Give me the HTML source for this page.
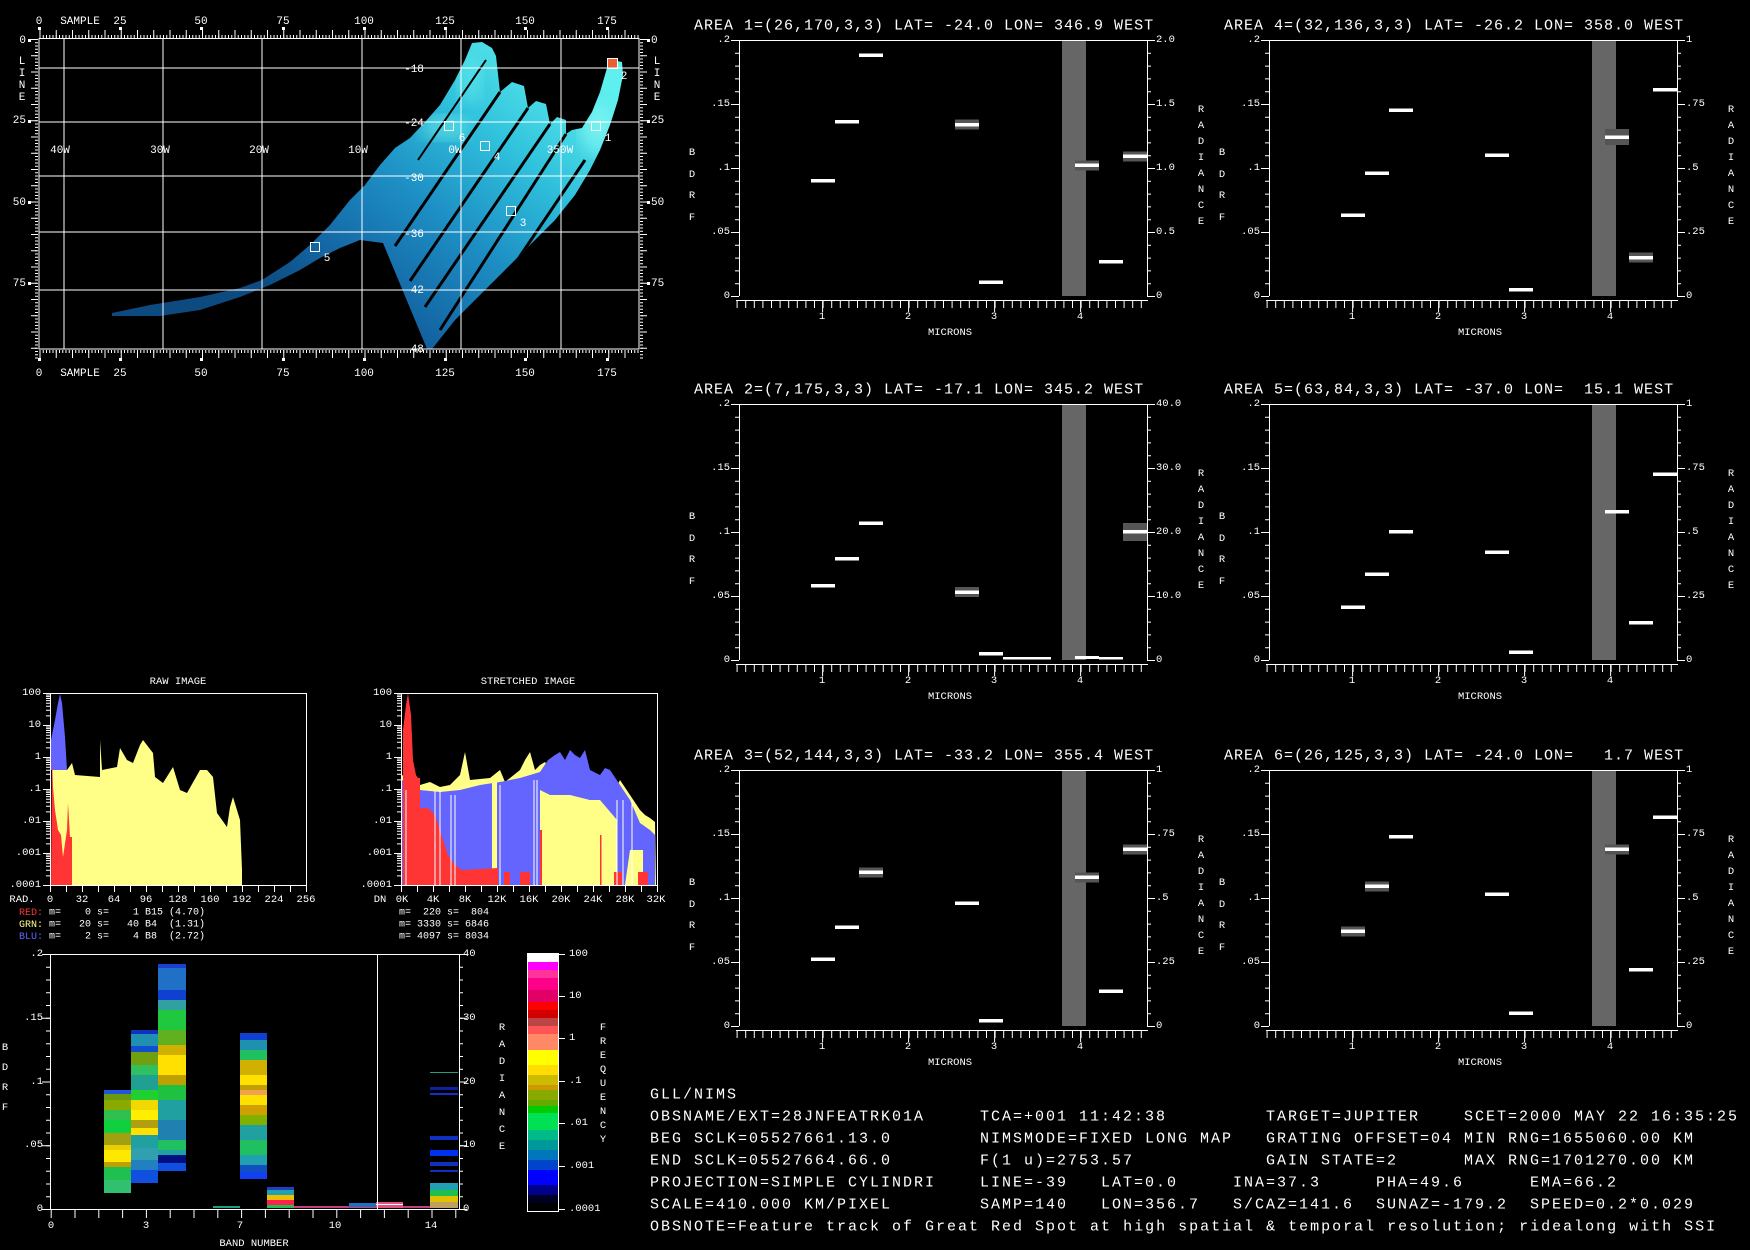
<!DOCTYPE html>
<html><head><meta charset="utf-8"><style>
html,body{margin:0;padding:0;background:#000;}
svg{display:block;}
text{font-family:"Liberation Mono","DejaVu Sans Mono",monospace;fill:#fff;white-space:pre;}
.t{font-size:15px;letter-spacing:1px;dominant-baseline:central;}
.s{font-size:10.5px;dominant-baseline:central;}
.m{font-size:11px;dominant-baseline:central;}
.b{font-size:15px;letter-spacing:2px;dominant-baseline:central;}
.l{font-size:10px;dominant-baseline:central;}
</style></head><body>
<svg width="1750" height="1250" viewBox="0 0 1750 1250" xmlns="http://www.w3.org/2000/svg" xml:space="preserve">
<defs>
<linearGradient id="sw" gradientUnits="userSpaceOnUse" x1="560" y1="50" x2="330" y2="340">
<stop offset="0" stop-color="#5ef0ee"/><stop offset="0.3" stop-color="#2fc0dc"/><stop offset="0.55" stop-color="#1d8fc4"/><stop offset="0.8" stop-color="#1468a6"/><stop offset="1" stop-color="#0c4a80"/></linearGradient>
<filter id="bl"><feGaussianBlur stdDeviation="8"/></filter>
<clipPath id="swc"><polygon points="112,313 150,305 200,297 240,288 262,280 290,262 310,245 330,225 350,200 365,185 380,165 395,148 410,138 425,122 440,105 455,80 465,60 472,43 482,42 492,48 496,56 500,92 512,82 524,86 528,108 536,101 546,104 550,124 557,117 566,120 566,134 572,130 582,128 592,112 600,92 607,68 612,60 622,62 623,75 618,100 610,125 600,150 590,170 575,195 555,220 530,245 505,270 480,295 455,320 432,349 427,349 383,243 360,240 340,248 320,258 300,270 270,285 240,297 200,310 160,316 112,316"/></clipPath>
<g id="ax" fill="none" stroke="#fff">
<path d="M0 0.5H408M0.5 0V256M408.5 0V256M-3 260.5H409"/>
<line x1="-2" y1="0" x2="-2" y2="257" stroke-width="4" stroke-dasharray="1 11.8"/>
<line x1="-4" y1="0" x2="-4" y2="257" stroke-width="8" stroke-dasharray="1 63"/>
<line x1="410" y1="0" x2="410" y2="257" stroke-width="4" stroke-dasharray="1 11.8"/>
<line x1="412" y1="0" x2="412" y2="257" stroke-width="8" stroke-dasharray="1 63"/>
<line x1="-2.4" y1="264" x2="409" y2="264" stroke-width="8" stroke-dasharray="1 7.6"/>
<path d="M83.6 260V272M169.6 260V272M255.6 260V272M341.6 260V272"/>
</g>
<g id="dec" stroke="#fff">
<path d="M-7 0.5H0M-4 2H0M-4 3.6H0M-4 5.5H0M-4 7.6H0M-4 10.2H0M-4 13.2H0M-4 17.2H0M-4 22.9H0"/>
</g>
</defs>

<!-- ============ MAP ============ -->
<g clip-path="url(#swc)">
<rect x="100" y="38" width="540" height="312" fill="url(#sw)"/>
<ellipse cx="598" cy="128" rx="18" ry="26" fill="#8ffff8" opacity="0.55" filter="url(#bl)"/>
<ellipse cx="445" cy="128" rx="25" ry="12" fill="#7ffff0" opacity="0.45" filter="url(#bl)"/>
<ellipse cx="470" cy="80" rx="12" ry="25" fill="#6ff8f0" opacity="0.4" filter="url(#bl)"/>
<g stroke="#000" stroke-width="3">
<line x1="500" y1="92" x2="395" y2="246"/>
<line x1="528" y1="108" x2="410" y2="281"/>
<line x1="550" y1="124" x2="425" y2="307"/>
<line x1="566" y1="134" x2="440" y2="330"/>
<line x1="585" y1="160" x2="460" y2="345"/>
<line x1="486" y1="60" x2="418" y2="160" stroke-width="2"/>
</g>
</g>
<rect x="608" y="58" width="10" height="10" fill="#e86030"/>
<g stroke="#fff" fill="none">
<path d="M64 39V349M163 39V349M262 39V349M362 39V349M461 39V349M561 39V349M39 68H639M39 122H639M39 176H639M39 232H639M39 290H639"/>
<rect x="39" y="38.5" width="600" height="310.5"/>
<line x1="39.5" y1="36.5" x2="639" y2="36.5" stroke-width="3" stroke-dasharray="1 2.25"/>
<line x1="39.5" y1="34" x2="639" y2="34" stroke-width="8" stroke-dasharray="1 15.25"/>
<line x1="39.5" y1="351.5" x2="639" y2="351.5" stroke-width="3" stroke-dasharray="1 2.25"/>
<line x1="39.5" y1="354" x2="639" y2="354" stroke-width="8" stroke-dasharray="1 15.25"/>
<line x1="36.5" y1="39" x2="36.5" y2="360" stroke-width="3" stroke-dasharray="1 2.25"/>
<line x1="34" y1="39" x2="34" y2="360" stroke-width="6" stroke-dasharray="1 15.25"/>
<line x1="641.5" y1="39" x2="641.5" y2="360" stroke-width="3" stroke-dasharray="1 2.25"/>
<line x1="644" y1="39" x2="644" y2="360" stroke-width="6" stroke-dasharray="1 15.25"/>
<rect x="310.5" y="242.5" width="9" height="9"/>
<rect x="444.5" y="121.5" width="9" height="9"/>
<rect x="480.5" y="141.5" width="9" height="9"/>
<rect x="506.5" y="206.5" width="9" height="9"/>
<rect x="591.5" y="121.5" width="9" height="9"/>
<rect x="607.5" y="58.5" width="10" height="10"/>
</g>
<g fill="#fff">
<rect x="38" y="27" width="3" height="3"/><rect x="119" y="27" width="3" height="3"/><rect x="200" y="27" width="3" height="3"/><rect x="282" y="27" width="3" height="3"/><rect x="363" y="27" width="3" height="3"/><rect x="444" y="27" width="3" height="3"/><rect x="524" y="27" width="3" height="3"/><rect x="606" y="27" width="3" height="3"/>
<rect x="38" y="358" width="3" height="3"/><rect x="119" y="358" width="3" height="3"/><rect x="200" y="358" width="3" height="3"/><rect x="282" y="358" width="3" height="3"/><rect x="363" y="358" width="3" height="3"/><rect x="444" y="358" width="3" height="3"/><rect x="524" y="358" width="3" height="3"/><rect x="606" y="358" width="3" height="3"/>
<rect x="28" y="39" width="3" height="3"/><rect x="28" y="120" width="3" height="3"/><rect x="28" y="201" width="3" height="3"/><rect x="28" y="282" width="3" height="3"/>
<rect x="647" y="39" width="3" height="3"/><rect x="647" y="120" width="3" height="3"/><rect x="647" y="201" width="3" height="3"/><rect x="647" y="282" width="3" height="3"/>
</g>
<g class="m" text-anchor="middle">
<text x="39" y="22">0</text><text x="80" y="22">SAMPLE</text><text x="120" y="22">25</text><text x="201" y="22">50</text><text x="283" y="22">75</text><text x="364" y="22">100</text><text x="445" y="22">125</text><text x="525" y="22">150</text><text x="607" y="22">175</text>
<text x="39" y="374">0</text><text x="80" y="374">SAMPLE</text><text x="120" y="374">25</text><text x="201" y="374">50</text><text x="283" y="374">75</text><text x="364" y="374">100</text><text x="445" y="374">125</text><text x="525" y="374">150</text><text x="607" y="374">175</text>
<text x="22" y="62">L</text><text x="22" y="74">I</text><text x="22" y="86">N</text><text x="22" y="98">E</text>
<text x="657" y="62">L</text><text x="657" y="74">I</text><text x="657" y="86">N</text><text x="657" y="98">E</text>
<text x="60" y="151">40W</text><text x="160" y="151">30W</text><text x="259" y="151">20W</text><text x="358" y="151">10W</text><text x="455" y="151">0W</text><text x="560" y="151">350W</text>
<text x="414" y="70">-18</text><text x="414" y="124">-24</text><text x="414" y="179">-30</text><text x="414" y="235">-36</text><text x="414" y="291">-42</text><text x="414" y="350">-48</text>
<text x="608" y="139">1</text><text x="624" y="77">2</text><text x="523" y="224">3</text><text x="497" y="158">4</text><text x="327" y="259">5</text><text x="462" y="139">6</text>
</g>
<g class="m" text-anchor="end">
<text x="26" y="41">0</text><text x="26" y="121">25</text><text x="26" y="203">50</text><text x="26" y="284">75</text>
</g>
<g class="m">
<text x="651" y="41">0</text><text x="651" y="121">25</text><text x="651" y="203">50</text><text x="651" y="284">75</text>
</g>

<!-- ============ SPECTRA PANELS ============ -->
<g fill="#666">
<rect x="1062" y="40" width="24" height="256"/><rect x="1592" y="40" width="24" height="256"/>
<rect x="1062" y="404" width="24" height="256"/><rect x="1592" y="404" width="24" height="256"/>
<rect x="1062" y="770" width="24" height="256"/><rect x="1592" y="770" width="24" height="256"/>
</g>
<use href="#ax" x="739" y="40"/><use href="#ax" x="1269" y="40"/>
<use href="#ax" x="739" y="404"/><use href="#ax" x="1269" y="404"/>
<use href="#ax" x="739" y="770"/><use href="#ax" x="1269" y="770"/>

<g fill="#555">
<rect x="955" y="119.5" width="24" height="10"/><rect x="1075" y="160.5" width="24" height="10"/><rect x="1123" y="151.5" width="24" height="10"/>
<rect x="1605" y="129" width="24" height="16"/><rect x="1629" y="252.5" width="24" height="10"/>
<rect x="955" y="587" width="24" height="10"/><rect x="1123" y="523" width="24" height="18"/>
<rect x="859" y="867.5" width="24" height="10"/><rect x="1075" y="872.5" width="24" height="10"/><rect x="1123" y="844.5" width="24" height="10"/>
<rect x="1341" y="926.5" width="24" height="10"/><rect x="1365" y="881.5" width="24" height="10"/><rect x="1605" y="844.5" width="24" height="10"/>
</g>
<g fill="#fff">
<rect x="811" y="179" width="24" height="3.5"/><rect x="835" y="120" width="24" height="3.5"/><rect x="859" y="53.5" width="24" height="3.5"/><rect x="955" y="123" width="24" height="3.5"/><rect x="979" y="280.5" width="24" height="3.5"/><rect x="1075" y="163.5" width="24" height="3.5"/><rect x="1099" y="260" width="24" height="3.5"/><rect x="1123" y="154.5" width="24" height="3.5"/>
<rect x="1341" y="213.5" width="24" height="3.5"/><rect x="1365" y="171.5" width="24" height="3.5"/><rect x="1389" y="108.5" width="24" height="3.5"/><rect x="1485" y="153.5" width="24" height="3.5"/><rect x="1509" y="288" width="24" height="3.5"/><rect x="1605" y="135.5" width="24" height="3.5"/><rect x="1629" y="256" width="24" height="3.5"/><rect x="1653" y="88" width="24" height="3.5"/>
<rect x="811" y="584" width="24" height="3.5"/><rect x="835" y="557" width="24" height="3.5"/><rect x="859" y="521.5" width="24" height="3.5"/><rect x="955" y="590.5" width="24" height="3.5"/><rect x="979" y="652" width="24" height="3.5"/><rect x="1003" y="657" width="48" height="2.5"/><rect x="1075" y="656" width="24" height="3"/><rect x="1099" y="657" width="24" height="2.5"/><rect x="1123" y="530" width="24" height="3.5"/>
<rect x="1341" y="605.5" width="24" height="3.5"/><rect x="1365" y="572.5" width="24" height="3.5"/><rect x="1389" y="530" width="24" height="3.5"/><rect x="1485" y="550.5" width="24" height="3.5"/><rect x="1509" y="650.5" width="24" height="3.5"/><rect x="1605" y="510" width="24" height="3.5"/><rect x="1629" y="621" width="24" height="3.5"/><rect x="1653" y="472.5" width="24" height="3.5"/>
<rect x="811" y="957.5" width="24" height="3.5"/><rect x="835" y="925.5" width="24" height="3.5"/><rect x="859" y="870.5" width="24" height="3.5"/><rect x="955" y="901.5" width="24" height="3.5"/><rect x="979" y="1019" width="24" height="3.5"/><rect x="1075" y="875.5" width="24" height="3.5"/><rect x="1099" y="989.5" width="24" height="3.5"/><rect x="1123" y="847.5" width="24" height="3.5"/>
<rect x="1341" y="929.5" width="24" height="3.5"/><rect x="1365" y="884.5" width="24" height="3.5"/><rect x="1389" y="835" width="24" height="3.5"/><rect x="1485" y="892.5" width="24" height="3.5"/><rect x="1509" y="1011.5" width="24" height="3.5"/><rect x="1605" y="847.5" width="24" height="3.5"/><rect x="1629" y="968" width="24" height="3.5"/><rect x="1653" y="815.5" width="24" height="3.5"/>
</g>

<g class="t">
<text x="694" y="26">AREA 1=(26,170,3,3) LAT= -24.0 LON= 346.9 WEST</text>
<text x="1224" y="26">AREA 4=(32,136,3,3) LAT= -26.2 LON= 358.0 WEST</text>
<text x="694" y="390">AREA 2=(7,175,3,3) LAT= -17.1 LON= 345.2 WEST</text>
<text x="1224" y="390">AREA 5=(63,84,3,3) LAT= -37.0 LON=  15.1 WEST</text>
<text x="694" y="756">AREA 3=(52,144,3,3) LAT= -33.2 LON= 355.4 WEST</text>
<text x="1224" y="756">AREA 6=(26,125,3,3) LAT= -24.0 LON=   1.7 WEST</text>
</g>
<g class="s" text-anchor="end">
<text x="730" y="40">.2</text><text x="730" y="104">.15</text><text x="730" y="168">.1</text><text x="730" y="232">.05</text><text x="730" y="296">0</text>
<text x="1260" y="40">.2</text><text x="1260" y="104">.15</text><text x="1260" y="168">.1</text><text x="1260" y="232">.05</text><text x="1260" y="296">0</text>
<text x="730" y="404">.2</text><text x="730" y="468">.15</text><text x="730" y="532">.1</text><text x="730" y="596">.05</text><text x="730" y="660">0</text>
<text x="1260" y="404">.2</text><text x="1260" y="468">.15</text><text x="1260" y="532">.1</text><text x="1260" y="596">.05</text><text x="1260" y="660">0</text>
<text x="730" y="770">.2</text><text x="730" y="834">.15</text><text x="730" y="898">.1</text><text x="730" y="962">.05</text><text x="730" y="1026">0</text>
<text x="1260" y="770">.2</text><text x="1260" y="834">.15</text><text x="1260" y="898">.1</text><text x="1260" y="962">.05</text><text x="1260" y="1026">0</text>
</g>
<g class="s">
<text x="1156" y="40">2.0</text><text x="1156" y="104">1.5</text><text x="1156" y="168">1.0</text><text x="1156" y="232">0.5</text><text x="1156" y="296">0</text>
<text x="1686" y="40">1</text><text x="1686" y="104">.75</text><text x="1686" y="168">.5</text><text x="1686" y="232">.25</text><text x="1686" y="296">0</text>
<text x="1156" y="404">40.0</text><text x="1156" y="468">30.0</text><text x="1156" y="532">20.0</text><text x="1156" y="596">10.0</text><text x="1156" y="660">0</text>
<text x="1686" y="404">1</text><text x="1686" y="468">.75</text><text x="1686" y="532">.5</text><text x="1686" y="596">.25</text><text x="1686" y="660">0</text>
<text x="1156" y="770">1</text><text x="1156" y="834">.75</text><text x="1156" y="898">.5</text><text x="1156" y="962">.25</text><text x="1156" y="1026">0</text>
<text x="1686" y="770">1</text><text x="1686" y="834">.75</text><text x="1686" y="898">.5</text><text x="1686" y="962">.25</text><text x="1686" y="1026">0</text>
</g>
<g class="s" text-anchor="middle">
<text x="822" y="317">1</text><text x="908" y="317">2</text><text x="994" y="317">3</text><text x="1080" y="317">4</text><text x="950" y="333">MICRONS</text>
<text x="1352" y="317">1</text><text x="1438" y="317">2</text><text x="1524" y="317">3</text><text x="1610" y="317">4</text><text x="1480" y="333">MICRONS</text>
<text x="822" y="681">1</text><text x="908" y="681">2</text><text x="994" y="681">3</text><text x="1080" y="681">4</text><text x="950" y="697">MICRONS</text>
<text x="1352" y="681">1</text><text x="1438" y="681">2</text><text x="1524" y="681">3</text><text x="1610" y="681">4</text><text x="1480" y="697">MICRONS</text>
<text x="822" y="1047">1</text><text x="908" y="1047">2</text><text x="994" y="1047">3</text><text x="1080" y="1047">4</text><text x="950" y="1063">MICRONS</text>
<text x="1352" y="1047">1</text><text x="1438" y="1047">2</text><text x="1524" y="1047">3</text><text x="1610" y="1047">4</text><text x="1480" y="1063">MICRONS</text>
<text x="692" y="153">B</text><text x="692" y="175">D</text><text x="692" y="196">R</text><text x="692" y="218">F</text>
<text x="1222" y="153">B</text><text x="1222" y="175">D</text><text x="1222" y="196">R</text><text x="1222" y="218">F</text>
<text x="692" y="517">B</text><text x="692" y="539">D</text><text x="692" y="560">R</text><text x="692" y="582">F</text>
<text x="1222" y="517">B</text><text x="1222" y="539">D</text><text x="1222" y="560">R</text><text x="1222" y="582">F</text>
<text x="692" y="883">B</text><text x="692" y="905">D</text><text x="692" y="926">R</text><text x="692" y="948">F</text>
<text x="1222" y="883">B</text><text x="1222" y="905">D</text><text x="1222" y="926">R</text><text x="1222" y="948">F</text>
<text x="1201" y="110">R</text><text x="1201" y="126">A</text><text x="1201" y="142">D</text><text x="1201" y="158">I</text><text x="1201" y="174">A</text><text x="1201" y="190">N</text><text x="1201" y="206">C</text><text x="1201" y="222">E</text>
<text x="1731" y="110">R</text><text x="1731" y="126">A</text><text x="1731" y="142">D</text><text x="1731" y="158">I</text><text x="1731" y="174">A</text><text x="1731" y="190">N</text><text x="1731" y="206">C</text><text x="1731" y="222">E</text>
<text x="1201" y="474">R</text><text x="1201" y="490">A</text><text x="1201" y="506">D</text><text x="1201" y="522">I</text><text x="1201" y="538">A</text><text x="1201" y="554">N</text><text x="1201" y="570">C</text><text x="1201" y="586">E</text>
<text x="1731" y="474">R</text><text x="1731" y="490">A</text><text x="1731" y="506">D</text><text x="1731" y="522">I</text><text x="1731" y="538">A</text><text x="1731" y="554">N</text><text x="1731" y="570">C</text><text x="1731" y="586">E</text>
<text x="1201" y="840">R</text><text x="1201" y="856">A</text><text x="1201" y="872">D</text><text x="1201" y="888">I</text><text x="1201" y="904">A</text><text x="1201" y="920">N</text><text x="1201" y="936">C</text><text x="1201" y="952">E</text>
<text x="1731" y="840">R</text><text x="1731" y="856">A</text><text x="1731" y="872">D</text><text x="1731" y="888">I</text><text x="1731" y="904">A</text><text x="1731" y="920">N</text><text x="1731" y="936">C</text><text x="1731" y="952">E</text>
</g>

<!-- ============ HISTOGRAMS ============ -->
<polygon fill="#ffff88" points="52,885 52,760 53,770 67,770 72,763 75,775 100,777 100,740 102,770 117,767 120,748 127,760 133,763 140,745 143,740 153,753 155,777 163,783 173,767 180,790 187,793 200,770 207,770 213,777 217,813 227,827 230,807 233,797 240,820 242,870 242,885"/>
<polygon fill="#6464ff" points="51,770 51,740 55,720 58,703 60,694 62,703 65,737 67,770"/>
<polygon fill="#ff3535" points="51,885 52,757 53,787 55,810 58,830 61,835 63,857 67,830 68,803 70,837 72,837 72,885"/>
<g stroke="#fff" fill="none"><path d="M50.5 693V885M50 693.5H306.5V885M50 885.5H306"/>
<line x1="50" y1="888.5" x2="307" y2="888.5" stroke-width="7" stroke-dasharray="1 15"/></g>
<use href="#dec" x="50" y="693"/><use href="#dec" x="50" y="725"/><use href="#dec" x="50" y="757"/><use href="#dec" x="50" y="789"/><use href="#dec" x="50" y="821"/><use href="#dec" x="50" y="853"/>
<path d="M43 885.5H50" stroke="#fff"/>

<polygon fill="#ffff88" points="402,885 402,775 410,780 420,785 430,782 440,787 450,785 460,775 465,752 470,780 490,778 500,770 505,782 520,770 525,760 530,752 535,770 540,765 545,762 550,770 555,790 570,790 590,800 610,800 620,780 630,795 640,810 645,815 650,818 655,822 656,885"/>
<polygon fill="#6464ff" points="402,885 402,780 420,790 440,792 460,790 480,785 500,782 520,778 540,772 548,760 555,755 560,752 565,760 570,750 575,755 580,758 585,750 590,770 600,775 605,768 610,770 620,785 630,800 640,823 650,830 655,835 655,885 643,885 643,850 630,850 625,885 617,885 617,820 600,800 590,800 570,795 550,795 540,790 540,885"/>
<polygon fill="#ffff88" points="492,885 492,780 497,780 497,885"/>
<polygon fill="#ff3535" points="403,885 403,730 406,705 408,693 411,715 413,760 416,775 418,778 420,778 420,885"/>
<polygon fill="#ff3535" points="418,885 418,808 428,808 435,815 440,830 448,855 455,865 462,870 498,868 498,885"/>
<g fill="#ff3535"><rect x="504" y="872" width="6" height="13"/><rect x="520" y="872" width="10" height="13"/><rect x="614" y="872" width="8" height="13"/><rect x="638" y="872" width="10" height="13"/><rect x="540" y="830" width="2" height="55"/><rect x="600" y="835" width="1.5" height="50"/></g>
<g stroke="#fff" stroke-width="1"><path d="M406 790V885M435 790V885M440 790V885M451 795V885M455 795V885M500 785V885M534 780V885M537 780V885M617 800V885M623 800V885M632 800V885"/></g>
<g stroke="#fff" fill="none"><path d="M401.5 693V885M401 693.5H657.5V885M401 885.5H657"/>
<line x1="401" y1="888.5" x2="658" y2="888.5" stroke-width="7" stroke-dasharray="1 15"/></g>
<use href="#dec" x="401" y="693"/><use href="#dec" x="401" y="725"/><use href="#dec" x="401" y="757"/><use href="#dec" x="401" y="789"/><use href="#dec" x="401" y="821"/><use href="#dec" x="401" y="853"/>
<path d="M394 885.5H401" stroke="#fff"/>

<g class="s" text-anchor="middle">
<text x="178" y="682">RAW IMAGE</text><text x="528" y="682">STRETCHED IMAGE</text>
<text x="22" y="900">RAD.</text><text x="50" y="900">0</text><text x="82" y="900">32</text><text x="114" y="900">64</text><text x="146" y="900">96</text><text x="178" y="900">128</text><text x="210" y="900">160</text><text x="242" y="900">192</text><text x="274" y="900">224</text><text x="306" y="900">256</text>
<text x="380" y="900">DN</text><text x="402" y="900">0K</text><text x="433" y="900">4K</text><text x="465" y="900">8K</text><text x="497" y="900">12K</text><text x="529" y="900">16K</text><text x="561" y="900">20K</text><text x="593" y="900">24K</text><text x="625" y="900">28K</text><text x="656" y="900">32K</text>
</g>
<g class="s" text-anchor="end">
<text x="41" y="693">100</text><text x="41" y="725">10</text><text x="41" y="757">1</text><text x="41" y="789">.1</text><text x="41" y="821">.01</text><text x="41" y="853">.001</text><text x="41" y="885">.0001</text>
<text x="392" y="693">100</text><text x="392" y="725">10</text><text x="392" y="757">1</text><text x="392" y="789">.1</text><text x="392" y="821">.01</text><text x="392" y="853">.001</text><text x="392" y="885">.0001</text>
</g>
<g class="l">
<text x="19" y="913"><tspan fill="#ff3535">RED:</tspan> m=    0 s=    1 B15 (4.70)</text>
<text x="19" y="925"><tspan fill="#ffff88">GRN:</tspan> m=   20 s=   40 B4  (1.31)</text>
<text x="19" y="937"><tspan fill="#6464ff">BLU:</tspan> m=    2 s=    4 B8  (2.72)</text>
<text x="399" y="913">m=  220 s=  804</text>
<text x="399" y="925">m= 3330 s= 6846</text>
<text x="399" y="937">m= 4097 s= 8034</text>
</g>

<!-- ============ BAND PLOT ============ -->
<g>
<rect x="104" y="1090" width="27" height="4" fill="#2255dd"/><rect x="104" y="1094" width="27" height="6" fill="#6a9a10"/><rect x="104" y="1100" width="27" height="10" fill="#8aaa00"/><rect x="104" y="1110" width="27" height="10" fill="#30c050"/><rect x="104" y="1120" width="27" height="13" fill="#10d040"/><rect x="104" y="1133" width="27" height="12" fill="#a0a010"/><rect x="104" y="1145" width="27" height="5" fill="#e8d000"/><rect x="104" y="1150" width="27" height="12" fill="#ffe800"/><rect x="104" y="1162" width="27" height="5" fill="#c0a000"/><rect x="104" y="1167" width="27" height="13" fill="#20c050"/><rect x="104" y="1180" width="27" height="13" fill="#30c070"/>
<rect x="131" y="1030" width="27" height="4" fill="#1030c0"/><rect x="131" y="1034" width="27" height="12" fill="#2090b0"/><rect x="131" y="1046" width="27" height="6" fill="#1050d0"/><rect x="131" y="1052" width="27" height="13" fill="#70a010"/><rect x="131" y="1065" width="27" height="10" fill="#30c060"/><rect x="131" y="1075" width="27" height="15" fill="#20a090"/><rect x="131" y="1090" width="27" height="10" fill="#20d030"/><rect x="131" y="1100" width="27" height="10" fill="#f0d800"/><rect x="131" y="1110" width="27" height="10" fill="#ffee00"/><rect x="131" y="1120" width="27" height="8" fill="#b0a010"/><rect x="131" y="1128" width="27" height="7" fill="#ffe000"/><rect x="131" y="1135" width="27" height="13" fill="#20a0a0"/><rect x="131" y="1148" width="27" height="12" fill="#30a0b0"/><rect x="131" y="1160" width="27" height="10" fill="#2080c0"/><rect x="131" y="1170" width="27" height="13" fill="#1050e0"/>
<rect x="158" y="964" width="28" height="4" fill="#1a40d0"/><rect x="158" y="968" width="28" height="22" fill="#2070c8"/><rect x="158" y="990" width="28" height="10" fill="#1040d0"/><rect x="158" y="1000" width="28" height="10" fill="#30a0a0"/><rect x="158" y="1010" width="28" height="20" fill="#20c840"/><rect x="158" y="1030" width="28" height="15" fill="#60b020"/><rect x="158" y="1045" width="28" height="10" fill="#d0b000"/><rect x="158" y="1055" width="28" height="20" fill="#ffe000"/><rect x="158" y="1075" width="28" height="10" fill="#c0a000"/><rect x="158" y="1085" width="28" height="15" fill="#20c040"/><rect x="158" y="1100" width="28" height="20" fill="#20a0a0"/><rect x="158" y="1120" width="28" height="20" fill="#2080b0"/><rect x="158" y="1140" width="28" height="10" fill="#20c060"/><rect x="158" y="1150" width="28" height="5" fill="#20a0a0"/><rect x="158" y="1155" width="28" height="8" fill="#001080"/><rect x="158" y="1163" width="28" height="8" fill="#1050e0"/>
<rect x="240" y="1033" width="27" height="7" fill="#1040d0"/><rect x="240" y="1040" width="27" height="10" fill="#2090b0"/><rect x="240" y="1050" width="27" height="10" fill="#20c060"/><rect x="240" y="1060" width="27" height="15" fill="#d0b000"/><rect x="240" y="1075" width="27" height="10" fill="#ffe000"/><rect x="240" y="1085" width="27" height="5" fill="#c0a000"/><rect x="240" y="1090" width="27" height="5" fill="#f0a050"/><rect x="240" y="1095" width="27" height="10" fill="#ffe000"/><rect x="240" y="1105" width="27" height="10" fill="#d0a000"/><rect x="240" y="1115" width="27" height="10" fill="#80b000"/><rect x="240" y="1125" width="27" height="15" fill="#20a0a0"/><rect x="240" y="1140" width="27" height="15" fill="#20c060"/><rect x="240" y="1155" width="27" height="10" fill="#20a0b0"/><rect x="240" y="1165" width="27" height="7" fill="#1050c0"/><rect x="240" y="1172" width="27" height="7" fill="#1040f0"/>
<rect x="267" y="1187" width="27" height="3" fill="#2040c0"/><rect x="267" y="1190" width="27" height="5" fill="#20a0b0"/><rect x="267" y="1195" width="27" height="5" fill="#f0c000"/><rect x="267" y="1200" width="27" height="5" fill="#ff2050"/><rect x="267" y="1205" width="27" height="3" fill="#20c050"/>
<rect x="213" y="1206" width="27" height="2" fill="#20a080"/><rect x="294" y="1206" width="136" height="2" fill="#c04080"/><rect x="349" y="1203" width="27" height="4" fill="#2070c0"/><rect x="376" y="1202" width="27" height="6" fill="#e05080"/><rect x="376" y="1204" width="27" height="1" fill="#fff"/>
<rect x="430" y="1072" width="28" height="1" fill="#20a080"/><rect x="430" y="1087" width="28" height="3" fill="#1020a0"/><rect x="430" y="1093" width="28" height="2" fill="#1030d0"/><rect x="430" y="1136" width="28" height="4" fill="#1030c0"/><rect x="430" y="1150" width="28" height="6" fill="#0030f0"/><rect x="430" y="1162" width="28" height="4" fill="#1030c0"/><rect x="430" y="1170" width="28" height="2" fill="#1030c0"/><rect x="430" y="1183" width="28" height="7" fill="#20a0b0"/><rect x="430" y="1190" width="28" height="6" fill="#20c050"/><rect x="430" y="1196" width="28" height="6" fill="#e0c000"/><rect x="430" y="1202" width="28" height="6" fill="#c0a060"/>
</g>
<g stroke="#fff" fill="none">
<path d="M50 954.5H459M50.5 954V1209M459.5 954V1209M50 1209.5H460M377.5 954V1209"/>
<line x1="48" y1="954" x2="48" y2="1210" stroke-width="4" stroke-dasharray="1 11.75"/>
<line x1="46" y1="954" x2="46" y2="1210" stroke-width="8" stroke-dasharray="1 62.75"/>
<line x1="461" y1="954" x2="461" y2="1210" stroke-width="4" stroke-dasharray="1 11.75"/>
<line x1="463" y1="954" x2="463" y2="1210" stroke-width="8" stroke-dasharray="1 62.75"/>
<line x1="50.7" y1="1214" x2="460" y2="1214" stroke-width="8" stroke-dasharray="1 22.8"/>
</g>
<g class="s" text-anchor="end">
<text x="43" y="954">.2</text><text x="43" y="1018">.15</text><text x="43" y="1082">.1</text><text x="43" y="1145">.05</text><text x="43" y="1209">0</text>
</g>
<g class="s">
<text x="463" y="954">40</text><text x="463" y="1018">30</text><text x="463" y="1082">20</text><text x="463" y="1145">10</text><text x="463" y="1209">0</text>
</g>
<g class="s" text-anchor="middle">
<text x="51" y="1226">0</text><text x="146" y="1226">3</text><text x="240" y="1226">7</text><text x="335" y="1226">10</text><text x="431" y="1226">14</text>
<text x="254" y="1244">BAND NUMBER</text>
<text x="5" y="1048">B</text><text x="5" y="1068">D</text><text x="5" y="1088">R</text><text x="5" y="1108">F</text>
<text x="502" y="1028">R</text><text x="502" y="1045">A</text><text x="502" y="1062">D</text><text x="502" y="1079">I</text><text x="502" y="1096">A</text><text x="502" y="1113">N</text><text x="502" y="1130">C</text><text x="502" y="1147">E</text>
<text x="603" y="1028">F</text><text x="603" y="1042">R</text><text x="603" y="1056">E</text><text x="603" y="1070">Q</text><text x="603" y="1084">U</text><text x="603" y="1098">E</text><text x="603" y="1112">N</text><text x="603" y="1126">C</text><text x="603" y="1140">Y</text>
</g>

<g>
<rect x="527" y="953" width="31" height="9" fill="#ffffff"/><rect x="527" y="962" width="31" height="8" fill="#ff00ff"/><rect x="527" y="970" width="31" height="8" fill="#ff3399"/><rect x="527" y="978" width="31" height="12" fill="#ff0088"/><rect x="527" y="990" width="31" height="12" fill="#e00066"/><rect x="527" y="1002" width="31" height="8" fill="#ff0000"/><rect x="527" y="1010" width="31" height="8" fill="#d00000"/><rect x="527" y="1018" width="31" height="8" fill="#bb4444"/><rect x="527" y="1026" width="31" height="8" fill="#ff5555"/><rect x="527" y="1034" width="31" height="16" fill="#ff8866"/><rect x="527" y="1050" width="31" height="15" fill="#ffff00"/><rect x="527" y="1065" width="31" height="10" fill="#ffdd00"/><rect x="527" y="1075" width="31" height="10" fill="#ccbb00"/><rect x="527" y="1085" width="31" height="5" fill="#cc9900"/><rect x="527" y="1090" width="31" height="10" fill="#88aa00"/><rect x="527" y="1100" width="31" height="6" fill="#66aa00"/><rect x="527" y="1106" width="31" height="7" fill="#00cc00"/><rect x="527" y="1113" width="31" height="17" fill="#00e055"/><rect x="527" y="1130" width="31" height="10" fill="#00bb88"/><rect x="527" y="1140" width="31" height="10" fill="#009999"/><rect x="527" y="1150" width="31" height="10" fill="#0077bb"/><rect x="527" y="1160" width="31" height="10" fill="#0044cc"/><rect x="527" y="1170" width="31" height="15" fill="#0000ff"/><rect x="527" y="1185" width="31" height="10" fill="#000088"/><rect x="527" y="1195" width="31" height="8" fill="#000022"/>
<rect x="527.5" y="953.5" width="31" height="258" fill="none" stroke="#fff"/>
<path d="M558 954.5H565M558 996.5H565M558 1038.5H565M558 1081.5H565M558 1123.5H565M558 1166.5H565M558 1209.5H565" stroke="#fff"/>
</g>
<g class="s">
<text x="569" y="954">100</text><text x="569" y="996">10</text><text x="569" y="1038">1</text><text x="569" y="1081">.1</text><text x="569" y="1123">.01</text><text x="569" y="1166">.001</text><text x="569" y="1209">.0001</text>
</g>

<g class="b">
<text x="650" y="1095">GLL/NIMS</text>
<text x="650" y="1117">OBSNAME/EXT=28JNFEATRK01A</text><text x="980" y="1117">TCA=+001 11:42:38</text><text x="1266" y="1117">TARGET=JUPITER</text><text x="1464" y="1117">SCET=2000 MAY 22 16:35:25</text>
<text x="650" y="1139">BEG SCLK=05527661.13.0</text><text x="980" y="1139">NIMSMODE=FIXED LONG MAP</text><text x="1266" y="1139">GRATING OFFSET=04</text><text x="1464" y="1139">MIN RNG=1655060.00 KM</text>
<text x="650" y="1161">END SCLK=05527664.66.0</text><text x="980" y="1161">F(1 u)=2753.57</text><text x="1266" y="1161">GAIN STATE=2</text><text x="1464" y="1161">MAX RNG=1701270.00 KM</text>
<text x="650" y="1183">PROJECTION=SIMPLE CYLINDRI</text><text x="980" y="1183">LINE=-39</text><text x="1101" y="1183">LAT=0.0</text><text x="1233" y="1183">INA=37.3</text><text x="1376" y="1183">PHA=49.6</text><text x="1530" y="1183">EMA=66.2</text>
<text x="650" y="1205">SCALE=410.000 KM/PIXEL</text><text x="980" y="1205">SAMP=140</text><text x="1101" y="1205">LON=356.7</text><text x="1233" y="1205">S/CAZ=141.6</text><text x="1376" y="1205">SUNAZ=-179.2</text><text x="1530" y="1205">SPEED=0.2*0.029</text>
<text x="650" y="1227">OBSNOTE=Feature track of Great Red Spot at high spatial &amp; temporal resolution; ridealong with SSI</text>
</g>
</svg>
</body></html>
